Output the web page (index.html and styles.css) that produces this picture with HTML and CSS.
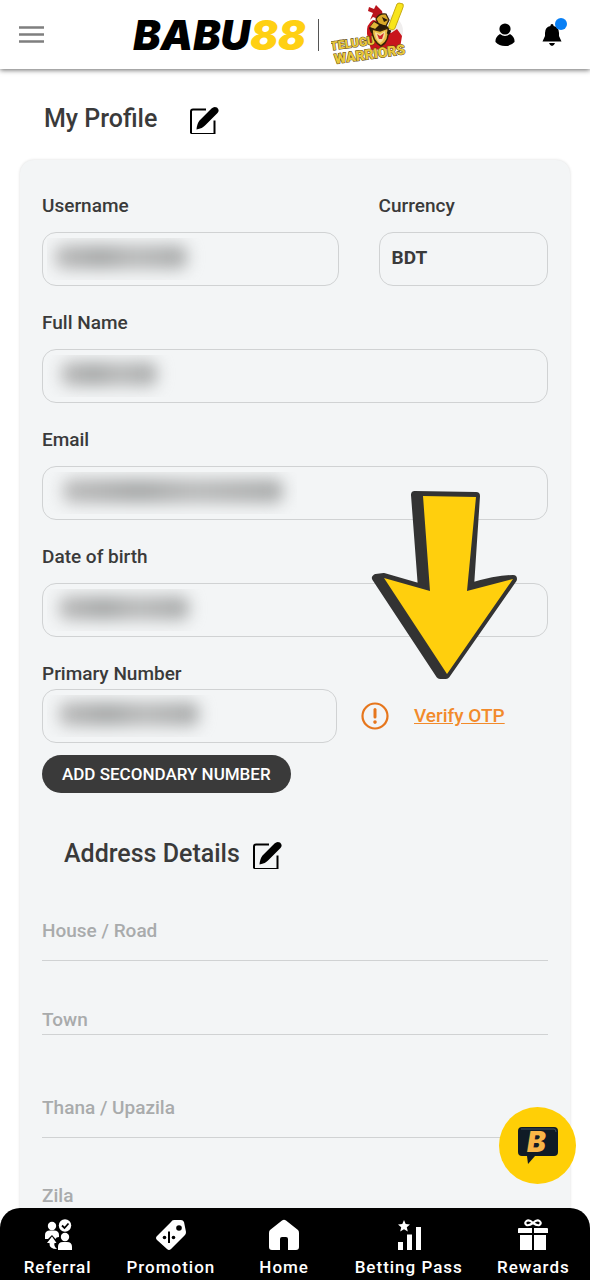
FILE: index.html
```html
<!DOCTYPE html>
<html lang="en">

<head>
  <meta charset="UTF-8">
  <meta name="viewport" content="width=device-width, initial-scale=1.0">
  <title>My Profile</title>
  <link rel="stylesheet" href="styles.css">
</head>

<body>
  <svg class="sprite" aria-hidden="true">
    <symbol id="icon-edit" viewBox="0 0 30 30">
      <path d="M17 3.5H4Q2 3.5 2 5.5V27" fill="none" stroke="currentColor" stroke-width="2" />
      <path d="M1.5 27.5H26" fill="none" stroke="currentColor" stroke-width="1" />
      <path d="M25.5 14.5V28" fill="none" stroke="currentColor" stroke-width="2" />
      <path d="M7.5 23.5Q8 17.5 10.5 14.5L22.5 2.5Q25 0 28 1.5Q31 4 28.5 7L16.5 19Q13.5 22.5 7.5 23.5Z" fill="currentColor" />
    </symbol>
  </svg>

  <header class="header">
    <button class="icon-btn" type="button" aria-label="Menu">
      <svg width="26" height="18" viewBox="0 0 26 18">
        <path d="M0 1.5H25M0 8.5H25M0 15.5H25" stroke="#7f7f7f" stroke-width="2.6" />
      </svg>
    </button>

    <div class="brand">
      <a class="logo" href="#">BABU<span>88</span></a>
      <svg class="sponsor" width="76" height="66" viewBox="0 0 76 66" role="img" aria-label="Telugu Warriors">
        <circle cx="56" cy="29" r="16" fill="#f0eeee" />
        <path d="M36 32Q35 22 42 18L52 20L56 28L60 31L66 27L71 34L69 46L40 48Z" fill="#c8151c" />
        <path d="M38 5L43 7L45 3L48 6L51 9L52 14L48 13L47 17L42 15L39 18L42 11L37 9Z" fill="#b9141c" />
        <g transform="rotate(-8 4 62)">
          <text class="sponsor-text" x="2" y="48" font-size="12">TELUGU</text>
          <text class="sponsor-text" x="4" y="62" font-size="14">WARRIORS</text>
        </g>
        <path d="M45 17Q48 11 55 12L58 18L55 24L48 23Z" fill="#d8a928" stroke="#332107" stroke-width="1.2" />
        <path d="M51 15L57 18L53 20Z" fill="#2a1a06" />
        <path d="M38 26L43 19L50 22L58 25L57 30L40 31Z" fill="#2b1b08" />
        <path d="M39 25L43 20L48 23L44 27Z" fill="#e0b638" />
        <path d="M41 27L49 29L57 26Q59 39 50 44Q41 39 41 27Z" fill="#e9bd45" stroke="#3a2506" stroke-width="1.5" />
        <path d="M44 30L49 32L54 29Q55 37 49 41Q44 37 44 30Z" fill="#f5dc96" />
        <path d="M46 32L49 34L53 31L51 37L48 37Z" fill="#cf272b" />
        <path d="M66 2Q67 0 72 2Q73 4 71 8L64 26Q63 29 59 27Q57 26 58 23Z" fill="#f8e51b" stroke="#c8ab12" stroke-width="1" />
        <path d="M59 28L57 32" stroke="#24180c" stroke-width="3" />
      </svg>
    </div>

    <div class="header-actions">
      <button class="icon-btn" type="button" aria-label="Account">
        <svg width="20" height="24" viewBox="0 0 20 24">
          <circle cx="10" cy="6" r="5.6" />
          <path d="M5 11Q10 15 15 11Q20 14 19.5 19Q16 23 10 23Q4 23 .5 19Q0 14 5 11Z" />
        </svg>
      </button>
      <button class="icon-btn bell" type="button" aria-label="Notifications">
        <svg width="20" height="24" viewBox="0 0 20 24">
          <path d="M8.5 3V2Q10 0 11.5 2V3Q17 4 17 10V13L19.5 18.500H.5L3 13V10Q3 4 8.5 3Z" />
          <path d="M7 20H13Q12 23 10 23Q8 23 7 20Z" />
        </svg>
      </button>
    </div>
  </header>

  <main class="content">
    <div class="page-title">
      <h1>My Profile</h1>
      <button class="icon-btn" type="button" aria-label="Edit profile"><svg class="edit"><use href="#icon-edit" /></svg></button>
    </div>

    <form class="card">
      <div class="row">
        <div class="field">
          <label for="username">Username</label>
          <div class="box">
            <input type="text" id="username" readonly>
            <span class="mask mask-username"></span>
          </div>
        </div>
        <div class="field">
          <label for="currency">Currency</label>
          <div class="box"><input type="text" id="currency" value="BDT" readonly></div>
        </div>
      </div>

      <div class="field">
        <label for="fullname">Full Name</label>
        <div class="box">
          <input type="text" id="fullname" readonly>
          <span class="mask mask-name"></span>
        </div>
      </div>

      <div class="field">
        <label for="email">Email</label>
        <div class="box">
          <input type="email" id="email" readonly>
          <span class="mask mask-email"></span>
        </div>
      </div>

      <div class="field">
        <label for="dob">Date of birth</label>
        <div class="box">
          <input type="text" id="dob" readonly>
          <span class="mask mask-dob"></span>
          <svg class="arrow" width="150" height="194" viewBox="0 0 150 194" aria-hidden="true">
            <path d="M45 8L106 9L100 100Q128 92 143 92L76 188H70L6 91L14 90L52 101Z" fill="#333" stroke="#333" stroke-width="8" stroke-linejoin="round" />
            <path d="M53 9L106 10L97 104L143 92L77 187L14 91L60 104Z" fill="#ffcf0d" />
          </svg>
        </div>
      </div>

      <div class="field phone">
        <label for="phone">Primary Number</label>
        <div class="row">
          <div class="box">
            <input type="tel" id="phone" readonly>
            <span class="mask mask-phone"></span>
          </div>
          <div class="verify">
            <svg width="28" height="28" viewBox="0 0 28 28" fill="none" stroke="#e6761c" aria-hidden="true">
              <circle cx="14" cy="14" r="12.5" stroke-width="2.2" />
              <path d="M14 7.5V15" stroke-width="3" stroke-linecap="round" />
              <path d="M14 20V20.1" stroke-width="3.6" stroke-linecap="round" />
            </svg>
            <a href="#">Verify OTP</a>
          </div>
        </div>
      </div>

      <button class="btn-add" type="button">ADD SECONDARY NUMBER</button>

      <div class="section-title">
        <h2>Address Details</h2>
        <button class="icon-btn" type="button" aria-label="Edit address"><svg class="edit"><use href="#icon-edit" /></svg></button>
      </div>

      <div class="address">
        <input type="text" placeholder="House / Road" aria-label="House / Road">
        <input class="short" type="text" placeholder="Town" aria-label="Town">
        <input type="text" placeholder="Thana / Upazila" aria-label="Thana / Upazila">
        <input type="text" placeholder="Zila" aria-label="Zila">
      </div>
    </form>
  </main>

  <button class="chat" type="button" aria-label="Chat">
    <svg width="42" height="40" viewBox="0 0 42 40">
      <path d="M5 1H37Q41 1 41 5V26Q41 30 37 30H18L11 38L10 30H5Q1 30 1 26V5Q1 1 5 1Z" fill="#101b26" />
      <path d="M4 3H37Q39 3 39 6" fill="none" stroke="#405161" stroke-width="1" />
      <text class="chat-letter" x="10" y="26">B</text>
    </svg>
  </button>

  <nav class="tabbar">
    <a href="#">
      <svg width="32" height="32" viewBox="0 0 32 32">
        <circle cx="10" cy="7" r="4.2" />
        <path d="M3 20V16Q3 11.5 8 11.5H12Q17 11.5 17 16V18Q14 18 13.5 20L10 16L6 20Z" />
        <circle cx="23" cy="6.5" r="6.2" />
        <path d="M20 6.5L22.5 9L26.5 4.5" fill="none" stroke="#000" stroke-width="1.8" />
        <circle cx="23" cy="18" r="4.2" />
        <path d="M16 31V28Q16 23 21 23H25Q30 23 30 28V31Z" />
        <path d="M5 24L10 17.5L14.5 24H12.5Q11.5 27 15 30Q7 30 7.5 24Z" />
      </svg>
      <span>Referral</span>
    </a>
    <a href="#">
      <svg width="32" height="32" viewBox="0 0 32 32">
        <path d="M19 1H26Q28 1 29 3L31 13Q31 15 30 16L16 30Q14 32 12 30L2 21Q0 19 2 17L16 3Q17 1 19 1Z" />
        <circle cx="24" cy="9" r="2.8" fill="#000" />
        <path d="M14 12.5V24" stroke="#000" stroke-width="2" />
        <circle cx="9.5" cy="18.5" r="1.8" fill="#000" />
        <circle cx="18.5" cy="18.5" r="1.8" fill="#000" />
      </svg>
      <span>Promotion</span>
    </a>
    <a href="#">
      <svg width="32" height="32" viewBox="0 0 32 32">
        <path d="M14 1.5Q16 0 18 1.5L30 11Q31 12 31 14V28Q31 31 28 31H20V20Q20 18 18 18H14Q12 18 12 20V31H4Q1 31 1 28V14Q1 12 2 11Z" />
      </svg>
      <span>Home</span>
    </a>
    <a href="#">
      <svg width="32" height="32" viewBox="0 0 32 32">
        <path d="M11 1L12.7 5L17 5.4L13.8 8.2L14.8 12.5L11 10.2L7.2 12.5L8.2 8.2L5 5.4L9.3 5Z" />
        <path d="M5 23H10V31H5ZM14 15.5H19V31H14ZM23 8H28V31H23Z" />
      </svg>
      <span>Betting Pass</span>
    </a>
    <a href="#">
      <svg width="32" height="32" viewBox="0 0 32 32">
        <path d="M2 9H15V14H1V10Q1 9 2 9ZM17 9H30Q31 9 31 10V14H17ZM3 16H15V31H3ZM17 16H29V31H17Z" />
        <path d="M16 4Q12 0 9.5 2Q7 4 9.5 6Q12 7 16 4Q20 0 22.5 2Q25 4 22.5 6Q20 7 16 4" fill="none" stroke="#fff" stroke-width="2.2" />
      </svg>
      <span>Rewards</span>
    </a>
  </nav>
</body>

</html>
```
FILE: styles.css
```css
* {
  box-sizing: border-box;
}

body {
  display: flex;
  flex-direction: column;
  height: 100vh;
  margin: 0;
  font-family: Roboto, "Liberation Sans", sans-serif;
  font-weight: 500;
  color: #3a3a3a;
  background-color: #fff;
}

h1,
h2 {
  margin: 0;
  font-size: 25px;
  font-weight: 500;
  line-height: 32px;
}

svg {
  display: block;
  flex-shrink: 0;
}

.sprite {
  display: none;
}

.icon-btn {
  padding: 0;
  border: none;
  background: none;
  color: #000;
  cursor: pointer;
}

/* header */
.header {
  display: flex;
  flex-shrink: 0;
  align-items: center;
  height: 69px;
  padding: 0 28px 0 19px;
  background-color: #fff;
  box-shadow: 0 1px 5px rgba(0, 0, 0, 0.6);
  z-index: 2;
}

.brand {
  display: flex;
  align-items: center;
  margin: 0 auto;
}

.logo {
  padding-right: 12px;
  font-family: Inter, Roboto, sans-serif;
  font-size: 41px;
  font-style: italic;
  font-weight: 900;
  line-height: 32px;
  color: #000;
  text-decoration: none;
  border-right: 1px solid #555;
}

.logo span {
  color: #ffd013;
}

.sponsor {
  margin-left: 12px;
}

.sponsor-text {
  font-family: Roboto, sans-serif;
  font-weight: 900;
  fill: #e9c93c;
  stroke: #5a4212;
  stroke-width: 1px;
  paint-order: stroke;
}

.header-actions {
  display: flex;
  gap: 27px;
}

.bell {
  position: relative;
}

.bell::after {
  content: "";
  position: absolute;
  top: -5px;
  right: -5px;
  width: 12px;
  height: 12px;
  border-radius: 50%;
  background-color: #087ff5;
}

/* profile */
.content {
  flex: 1;
  min-height: 0;
  padding: 33px 20px 0;
  overflow-y: auto;
  scrollbar-width: none;
}

.page-title,
.section-title {
  display: flex;
  align-items: center;
}

.page-title {
  gap: 32px;
  padding-left: 24px;
  margin-bottom: 24px;
}

.edit {
  width: 30px;
  height: 30px;
  margin-top: 4px;
}

.card {
  padding: 34px 22px 40px;
  border-radius: 14px;
  background-color: #f3f5f6;
  box-shadow: 0 0 3px rgba(0, 0, 0, 0.15);
}

.row {
  display: grid;
  grid-template-columns: 7fr 4fr;
  column-gap: 40px;
}

.field {
  margin-bottom: 25px;
}

.field label {
  display: block;
  margin-bottom: 14px;
  font-size: 19px;
  line-height: 24px;
}

.box {
  position: relative;
}

.box input {
  display: block;
  width: 100%;
  height: 54px;
  padding: 0 12px 4px;
  border: 1px solid #d0d2d3;
  border-radius: 14px;
  font: inherit;
  font-size: 19px;
  font-weight: 700;
  color: #3a3a3a;
  background: none;
}

.mask {
  position: absolute;
  top: 6px;
  left: 5px;
  width: 250px;
  height: 42px;
  overflow: hidden;
}

.mask::before {
  content: "";
  display: block;
  height: 24px;
  margin: 7px 8px;
  border-radius: 8px;
  background: linear-gradient(90deg, #bbb, #a6a8a8 35%, #b9baba 60%, #a9abab);
  filter: blur(8px);
}

.mask-username::before {
  width: 132px;
}

.mask-name::before {
  width: 96px;
  margin-left: 14px;
}

.mask-email::before {
  width: 220px;
  margin-left: 16px;
}

.mask-dob::before {
  width: 130px;
  margin-left: 12px;
}

.mask-phone::before {
  width: 140px;
  margin-left: 12px;
}

/* pointer to the verify link */
.arrow {
  position: absolute;
  right: 28px;
  bottom: -44px;
  z-index: 1;
}

.phone {
  margin-bottom: 12px;
}

.phone label {
  margin-bottom: 3px;
}

.phone .row {
  column-gap: 24px;
  grid-template-columns: 295fr 187fr;
}

.verify {
  display: flex;
  align-items: center;
  gap: 25px;
}

.verify a {
  font-size: 19px;
  line-height: 24px;
  color: #f28a2b;
}

.btn-add {
  display: block;
  height: 38px;
  padding: 0 20px;
  border: none;
  border-radius: 19px;
  font: inherit;
  font-size: 17px;
  color: #fff;
  background-color: #3a3a3a;
  cursor: pointer;
}

.section-title {
  gap: 12px;
  padding-left: 22px;
  margin: 44px 0 30px;
}

.address {
  display: flex;
  flex-direction: column;
}

.address input {
  height: 60px;
  padding: 0;
  border: none;
  border-bottom: 1px solid #d0d2d3;
  border-radius: 0;
  font: inherit;
  font-size: 19px;
  background: none;
}

.address input.short {
  height: 30px;
  margin: 44px 0 43px;
}

.address input:last-child {
  margin-top: 28px;
}

.address input::placeholder {
  color: #a9abac;
  opacity: 1;
}

/* chat */
.chat {
  position: fixed;
  right: 14px;
  bottom: 96px;
  display: flex;
  align-items: center;
  justify-content: center;
  width: 77px;
  height: 77px;
  padding: 0;
  border: none;
  border-radius: 50%;
  background-color: #ffcf06;
  z-index: 3;
  cursor: pointer;
}

.chat-letter {
  font-family: Inter, Roboto, sans-serif;
  font-size: 28px;
  font-style: italic;
  font-weight: 900;
  fill: #f9b547;
}

/* bottom tabs */
.tabbar {
  display: grid;
  flex-shrink: 0;
  grid-template-columns: 5fr 5fr 5fr 6fr 5fr;
  height: 72px;
  margin-top: -20px;
  padding: 11px 0 0 1px;
  border-radius: 20px 20px 0 0;
  background-color: #000;
  z-index: 2;
}

.tabbar a {
  display: flex;
  flex-direction: column;
  align-items: center;
  gap: 6px;
  font-size: 17px;
  line-height: 20px;
  letter-spacing: 1px;
  white-space: nowrap;
  color: #fff;
  text-decoration: none;
}

.tabbar svg {
  fill: #fff;
}
```
